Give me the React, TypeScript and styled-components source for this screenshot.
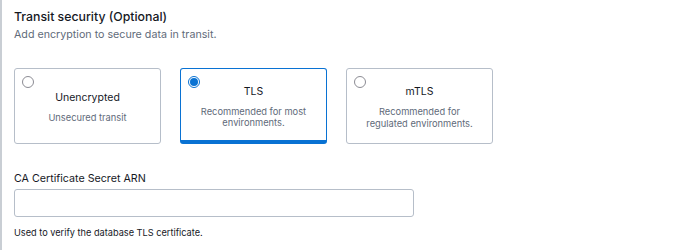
import React, { useState } from "react";
import styled, { createGlobalStyle } from "styled-components";

const Global = createGlobalStyle`
  html, body { margin: 0; padding: 0; background: #fff; }
  body { font-family: Inter, "Liberation Sans", sans-serif; -webkit-font-smoothing: antialiased; }
`;

const Page = styled.div`
  width: 692px;
  height: 250px;
  box-sizing: border-box;
  border-left: 2px solid #c9ced4;
  padding: 9px 0 0 12px;
  display: flex;
  flex-direction: column;
`;

const Title = styled.div`
  font-size: 12.3px;
  font-weight: 500;
  color: #16191f;
  line-height: 16px;
`;

const Subtitle = styled.div`
  font-size: 10.7px;
  color: #5f6b7a;
  line-height: 16px;
  margin-top: 2px;
`;

const Cards = styled.div`
  display: grid;
  grid-template-columns: repeat(3, 147px);
  column-gap: 19px;
  margin-top: 25px;
`;

const Card = styled.label<{ $selected: boolean }>`
  position: relative;
  height: 76px;
  box-sizing: border-box;
  border: 1px solid ${(p) => (p.$selected ? "#0972d3" : "#b6bec9")};
  border-bottom: ${(p) => (p.$selected ? "4px solid #0972d3" : "1px solid #b6bec9")};
  border-radius: 3px;
  display: flex;
  flex-direction: column;
  align-items: center;
  justify-content: center;
  text-align: center;
  padding: ${(p) => (p.$selected ? "4px 10px 0" : "2px 10px 0")};
  cursor: pointer;
`;

const Radio = styled.span<{ $selected: boolean }>`
  position: absolute;
  left: 7px;
  top: 7px;
  width: 12px;
  height: 12px;
  box-sizing: border-box;
  border-radius: 50%;
  border: 1px solid ${(p) => (p.$selected ? "#0972d3" : "#8c8c94")};
  background: #fff;
  display: flex;
  align-items: center;
  justify-content: center;
  &::after {
    content: "";
    display: ${(p) => (p.$selected ? "block" : "none")};
    width: 8px;
    height: 8px;
    border-radius: 50%;
    background: #0972d3;
  }
`;

const CardTitle = styled.div`
  font-size: 10.5px;
  color: #16191f;
  line-height: 13px;
`;

const CardDesc = styled.div`
  font-size: 9.3px;
  color: #5f6b7a;
  line-height: 11.5px;
  margin-top: 8px;
`;

const Field = styled.div`
  display: flex;
  flex-direction: column;
  margin-top: 28px;
`;

const Label = styled.label`
  font-size: 10.7px;
  color: #16191f;
  line-height: 14px;
`;

const Input = styled.input`
  width: 400px;
  height: 28px;
  box-sizing: border-box;
  margin-top: 3px;
  border: 1px solid #b6bec9;
  border-radius: 3px;
  outline: none;
  font-family: inherit;
  font-size: 11px;
  padding: 0 8px;
`;

const Help = styled.div`
  font-size: 9.2px;
  color: #16191f;
  line-height: 12px;
  margin-top: 10px;
`;

const options = [
  { id: "none", title: "Unencrypted", desc: ["Unsecured transit"] },
  { id: "tls", title: "TLS", desc: ["Recommended for most", "environments."] },
  { id: "mtls", title: "mTLS", desc: ["Recommended for", "regulated environments."] },
];

export default function App() {
  const [sel, setSel] = useState("tls");
  return (
    <>
      <Global />
      <Page>
        <Title>Transit security (Optional)</Title>
        <Subtitle>Add encryption to secure data in transit.</Subtitle>
        <Cards>
          {options.map((o) => (
            <Card key={o.id} $selected={sel === o.id} onClick={() => setSel(o.id)}>
              <Radio $selected={sel === o.id} />
              <CardTitle>{o.title}</CardTitle>
              <CardDesc>
                {o.desc.map((d, i) => (
                  <div key={i}>{d}</div>
                ))}
              </CardDesc>
            </Card>
          ))}
        </Cards>
        <Field>
          <Label>CA Certificate Secret ARN</Label>
          <Input />
          <Help>Used to verify the database TLS certificate.</Help>
        </Field>
      </Page>
    </>
  );
}
